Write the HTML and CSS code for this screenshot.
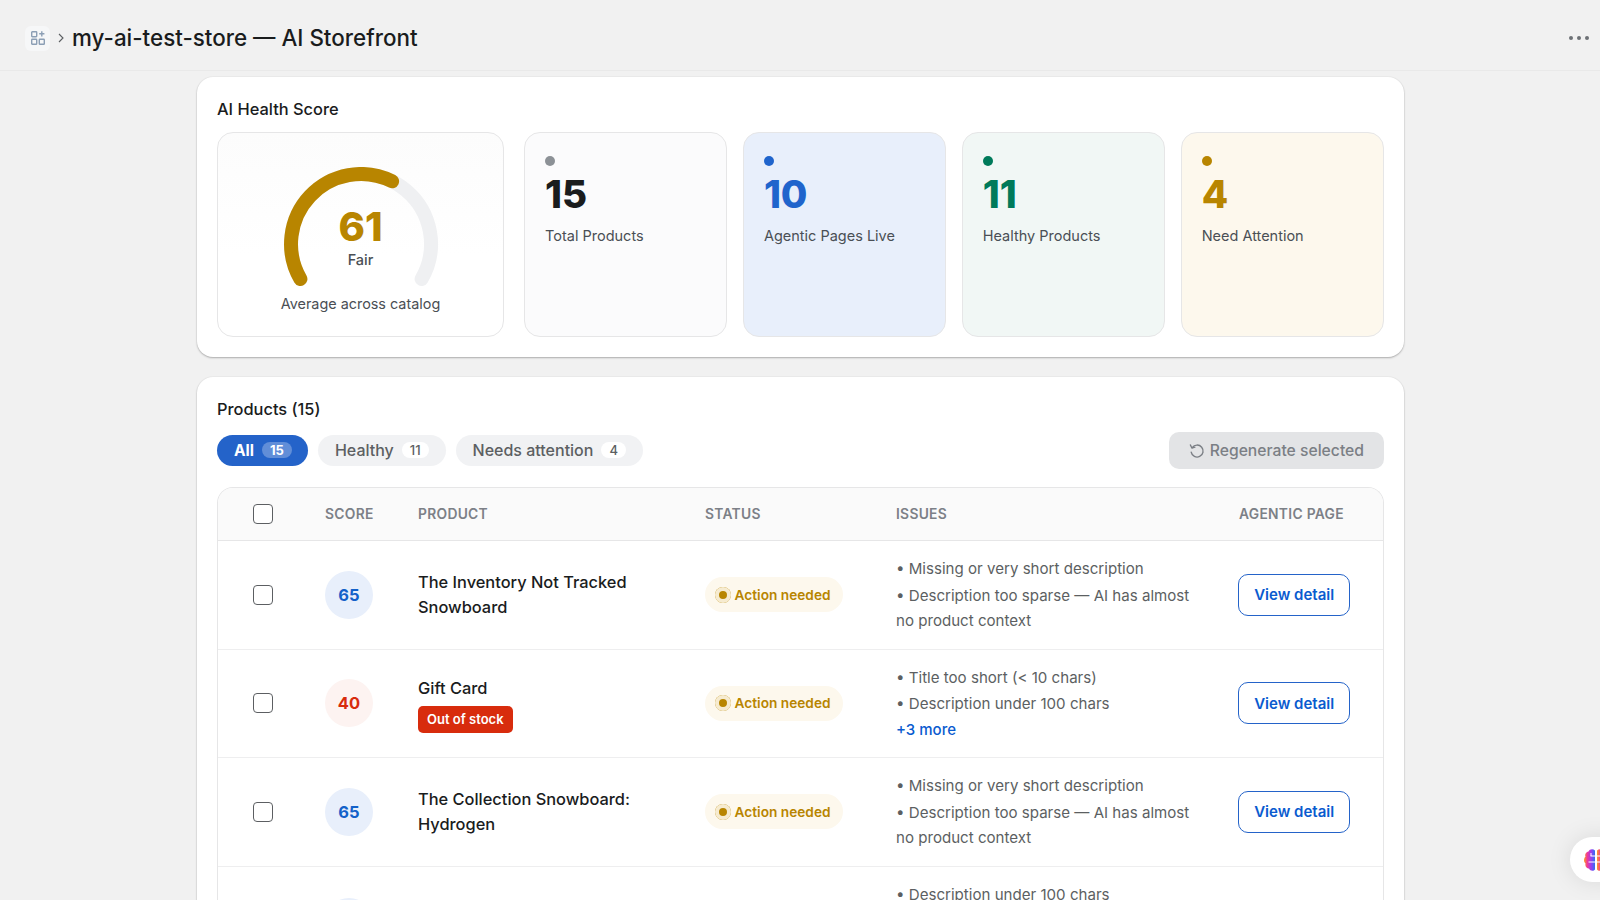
FILE: index.html
```html
<!DOCTYPE html>
<html>
	<head>
		<title>my-ai-test-store — AI Storefront</title>
		<link rel="stylesheet" href="styles.css">
	</head>
	<body>
		<header class="topbar">
			<div class="app-icon">
				<svg width="16" height="16" viewBox="0 0 16 16" fill="none" stroke="#8c9fb5" stroke-width="1.4">
					<rect x="1.7" y="1.7" width="5" height="5" rx=".6"/>
					<rect x="1.7" y="9.3" width="5" height="5" rx=".6"/>
					<rect x="9.3" y="9.3" width="5" height="5" rx=".6"/>
					<path d="M11.8 1.2v5.2M9.2 3.8h5.2"/>
				</svg>
			</div>
			<svg class="crumb" width="8" height="12" viewBox="0 0 8 12" fill="none" stroke="#5c5f62" stroke-width="1.1"><path d="M2 2l4 4-4 4"/></svg>
			<h1 class="page-title">my-ai-test-store — AI Storefront</h1>
			<div class="more"><span></span><span></span><span></span></div>
		</header>

		<main class="content">
			<section class="card">
				<h2 class="card-title">AI Health Score</h2>
				<div class="stats">
					<div class="gauge-card">
						<div class="gauge">
							<svg width="160" height="132" viewBox="0 0 160 132" fill="none" stroke-width="14" stroke-linecap="round">
								<path d="M19.4 112 A70 70 0 1 1 140.6 112" stroke="#eff0f2"/>
								<path d="M19.4 112 A70 70 0 0 1 111.1 14.3" stroke="#b88500"/>
							</svg>
							<div class="gauge-text">
								<div class="gauge-value">61</div>
								<div class="gauge-label">Fair</div>
							</div>
						</div>
						<div class="gauge-note">Average across catalog</div>
					</div>
					<div class="stat-grid">
						<div class="stat stat-gray">
							<span class="stat-dot"></span>
							<div class="stat-value">15</div>
							<div class="stat-label">Total Products</div>
						</div>
						<div class="stat stat-blue">
							<span class="stat-dot"></span>
							<div class="stat-value">10</div>
							<div class="stat-label">Agentic Pages Live</div>
						</div>
						<div class="stat stat-green">
							<span class="stat-dot"></span>
							<div class="stat-value">11</div>
							<div class="stat-label">Healthy Products</div>
						</div>
						<div class="stat stat-amber">
							<span class="stat-dot"></span>
							<div class="stat-value">4</div>
							<div class="stat-label">Need Attention</div>
						</div>
					</div>
				</div>
			</section>

			<section class="card">
				<h2 class="card-title">Products (15)</h2>
				<div class="toolbar">
					<div class="tabs">
						<div class="tab tab-active">All <span class="tab-count">15</span></div>
						<div class="tab">Healthy <span class="tab-count">11</span></div>
						<div class="tab">Needs attention <span class="tab-count">4</span></div>
					</div>
					<button class="regen" type="button">
						<svg width="16" height="16" viewBox="0 0 16 16" fill="none" stroke="#7b7f85" stroke-width="1.4" stroke-linecap="round" stroke-linejoin="round">
							<path d="M3.200 4.600A6 6 0 1 1 2.200 9.200"/>
							<path d="M1.400 2l1.500 3 3-.9"/>
						</svg>
						Regenerate selected
					</button>
				</div>

				<div class="table-wrap">
					<table class="products">
						<colgroup>
							<col class="col-check"><col class="col-score"><col class="col-product"><col class="col-status"><col class="col-issues"><col class="col-page">
						</colgroup>
						<thead>
							<tr>
								<th class="cell-check"><input type="checkbox"></th>
								<th>Score</th>
								<th>Product</th>
								<th>Status</th>
								<th>Issues</th>
								<th class="head-page">Agentic page</th>
							</tr>
						</thead>
						<tbody>
							<tr>
								<td class="cell-check"><input type="checkbox"></td>
								<td><div class="score score-blue">65</div></td>
								<td class="name">The Inventory Not Tracked Snowboard</td>
								<td><span class="status"><i class="status-dot"></i>Action needed</span></td>
								<td>
									<ul class="issues">
										<li>• Missing or very short description</li>
										<li>• Description too sparse — AI has almost no product context</li>
									</ul>
								</td>
								<td><a class="detail" href="#">View detail</a></td>
							</tr>
							<tr class="row-short">
								<td class="cell-check"><input type="checkbox"></td>
								<td><div class="score score-red">40</div></td>
								<td class="name name-stacked">
									Gift Card
									<div><span class="stock">Out of stock</span></div>
								</td>
								<td><span class="status"><i class="status-dot"></i>Action needed</span></td>
								<td>
									<ul class="issues issues-short">
										<li>• Title too short (&lt; 10 chars)</li>
										<li>• Description under 100 chars</li>
									</ul>
									<a class="more-issues" href="#">+3 more</a>
								</td>
								<td><a class="detail" href="#">View detail</a></td>
							</tr>
							<tr>
								<td class="cell-check"><input type="checkbox"></td>
								<td><div class="score score-blue">65</div></td>
								<td class="name">The Collection Snowboard: Hydrogen</td>
								<td><span class="status"><i class="status-dot"></i>Action needed</span></td>
								<td>
									<ul class="issues">
										<li>• Missing or very short description</li>
										<li>• Description too sparse — AI has almost no product context</li>
									</ul>
								</td>
								<td><a class="detail" href="#">View detail</a></td>
							</tr>
							<tr>
								<td class="cell-check"></td>
								<td class="cell-top"><div class="score score-blue"></div></td>
								<td></td>
								<td></td>
								<td class="cell-top">
									<ul class="issues">
										<li>• Description under 100 chars</li>
									</ul>
								</td>
								<td></td>
							</tr>
						</tbody>
					</table>
				</div>
			</section>
		</main>

		<div class="assistant">
			<svg width="26" height="26" viewBox="0 0 26 26" fill="none">
				<defs>
					<linearGradient id="brain" x1="0" y1="0" x2="1" y2="0">
						<stop offset="0" stop-color="#ff9a1f"/>
						<stop offset=".3" stop-color="#f0389a"/>
						<stop offset=".65" stop-color="#9a3df0"/>
						<stop offset="1" stop-color="#2f6df0"/>
					</linearGradient>
				</defs>
				<path d="M12 3.500C10 1.500 6.500 2 5.500 4.500 3 5 1.500 7.500 2.500 9.500 .5 11.500 .5 15 2.500 16.500 1.800 19 3.500 21.500 6 21.500 7 24 10.500 24.500 12 22.500Z" fill="url(#brain)"/>
				<path d="M14 3.500C16 1.500 19.500 2 20.500 4.500 23 5 24.500 7.500 23.500 9.500 25.500 11.500 25.500 15 23.500 16.500 24.200 19 22.500 21.500 20 21.500 19 24 15.500 24.500 14 22.500Z" fill="url(#brain)"/>
				<path d="M12 9H7.500M12 15H5.500M14 9h4.500M14 15h6.500M8 6v3M18 6v3" stroke="#fff" stroke-width="1"/>
			</svg>
		</div>
	</body>
</html>
```

FILE: styles.css
```css
* {
	box-sizing: border-box;
}
html, body {
	margin: 0;
	height: 900px;
	overflow: hidden;
}
body {
	background: #f1f1f1;
	color: #1a1c1d;
	font-family: Inter, "Noto Sans", sans-serif;
}

/* top bar */
.topbar {
	display: flex;
	align-items: center;
	height: 71px;
	padding: 6px 25px 0;
	border-bottom: 1px solid #e9e9e9;
}
.app-icon {
	display: flex;
	align-items: center;
	justify-content: center;
	width: 25px;
	height: 25px;
	background: #f6f7f8;
	border-radius: 6px;
}
.crumb {
	margin: 0 7px 0 7px;
}
.page-title {
	margin: 0;
	font-size: 22.400px;
	font-weight: 500;
	line-height: 32px;
}
.more {
	display: flex;
	gap: 4px;
	margin-left: auto;
	margin-right: -14px;
}
.more span {
	width: 4px;
	height: 4px;
	border-radius: 50%;
	background: #6d7175;
}

/* cards */
.content {
	display: flex;
	flex-direction: column;
	gap: 20px;
	width: 1207px;
	margin: 6px 0 0 197px;
}
.card {
	padding: 20px;
	background: #fff;
	border-radius: 16px;
	box-shadow: 0 1px 2px rgba(0, 0, 0, .28), 0 0 0 1px rgba(0, 0, 0, .02);
}
.card-title {
	margin: 0 0 11px;
	font-size: 16.400px;
	font-weight: 500;
	line-height: 24px;
}

/* health score */
.stats {
	display: flex;
	gap: 20px;
	height: 205px;
}
.stat-grid {
	display: grid;
	flex: 1;
	grid-template-columns: repeat(4, 1fr);
	gap: 15.500px;
}
.gauge-card {
	display: flex;
	flex-direction: column;
	align-items: center;
	flex: 0 0 287px;
	padding-top: 34px;
	background: linear-gradient(#fcfcfc, #fff 60%);
	border: 1px solid #e6e6e7;
	border-radius: 16px;
}
.gauge {
	position: relative;
	height: 132px;
}
.gauge svg {
	display: block;
}
.gauge-text {
	position: absolute;
	top: 37px;
	left: 0;
	right: 0;
	text-align: center;
}
.gauge-value {
	color: #b88500;
	font-size: 40px;
	font-weight: 800;
	line-height: 46px;
}
.gauge-label {
	color: #4a4f55;
	font-size: 14.500px;
	font-weight: 500;
	line-height: 20px;
}
.gauge-note {
	margin-top: -5px;
	color: #4a4f55;
	font-size: 14.400px;
	line-height: 20px;
}
.stat {
	padding: 23px 20px;
	border: 1px solid #e6e6e7;
	border-radius: 16px;
}
.stat-dot {
	display: block;
	width: 10px;
	height: 10px;
	border-radius: 50%;
}
.stat-value {
	margin-top: 5px;
	font-size: 38.500px;
	font-weight: 800;
	line-height: 46px;
}
.stat-label {
	margin-top: 9px;
	color: #4a4f55;
	font-size: 14.500px;
	line-height: 20px;
}
.stat-gray { background: #fbfbfc; }
.stat-gray .stat-dot { background: #8c9196; }
.stat-gray .stat-value { color: #1a1c1d; }
.stat-blue { background: #e8effb; }
.stat-blue .stat-dot { background: #1f64cc; }
.stat-blue .stat-value { color: #1f64cc; }
.stat-green { background: #f1f7f5; }
.stat-green .stat-dot { background: #007a5a; }
.stat-green .stat-value { color: #007a5a; }
.stat-amber { background: #fdf8ed; }
.stat-amber .stat-dot { background: #b88500; }
.stat-amber .stat-value { color: #b88500; }

/* filter row */
.toolbar {
	display: flex;
	align-items: center;
	justify-content: space-between;
	margin-bottom: 18px;
}
.tabs {
	display: flex;
	gap: 10px;
}
.tab {
	display: flex;
	align-items: center;
	gap: 8px;
	height: 31px;
	padding: 0 17px 1px;
	background: #f1f2f4;
	border-radius: 16px;
	color: #5c5f62;
	font-size: 16px;
	font-weight: 500;
}
.tab-count {
	padding: 0 8px;
	background: #fff;
	border-radius: 9px;
	font-size: 13px;
	line-height: 16px;
}
.tab-active {
	padding: 0 16px 1px 17px;
	background: #2463c9;
	color: #fff;
	font-size: 15.500px;
	font-weight: 700;
}
.tab-active .tab-count {
	background: rgba(255, 255, 255, .28);
}
.regen {
	display: flex;
	align-items: center;
	gap: 5px;
	height: 37px;
	padding: 0 20px;
	background: #e3e4e6;
	border: 0;
	border-radius: 10px;
	color: #7b7f85;
	font-family: inherit;
	font-size: 15.700px;
	font-weight: 500;
}

/* table */
.table-wrap {
	border: 1px solid #e6e6e7;
	border-bottom: 0;
	border-radius: 16px 16px 0 0;
	overflow: hidden;
}
.products {
	width: 100%;
	table-layout: fixed;
	border-collapse: collapse;
}
.col-check { width: 91px; }
.col-score { width: 93px; }
.col-product { width: 287px; }
.col-status { width: 191px; }
.col-issues { width: 342px; }
.products th {
	height: 52px;
	padding: 0 16px;
	background: #fafafa;
	border-bottom: 1px solid #e6e6e7;
	color: #7c8087;
	font-size: 13.800px;
	font-weight: 600;
	letter-spacing: .3px;
	text-align: left;
	text-transform: uppercase;
}
.products .head-page {
	padding-left: 17px;
}
.products td {
	padding: 15.500px 16px;
	border-bottom: 1px solid #eeeeef;
	vertical-align: middle;
}
.products .row-short td {
	padding-top: 15px;
	padding-bottom: 15px;
}
.products .cell-check,
.products .row-short .cell-check {
	padding: 0 2px 0 0;
	text-align: center;
}
.products .cell-top {
	vertical-align: top;
	padding-top: 15px;
}
.products .cell-top .score {
	margin-top: 16px;
}
input[type=checkbox] {
	display: block;
	width: 20px;
	height: 20px;
	margin: 0 auto;
	appearance: none;
	background: #fff;
	border: 1px solid #5c5f62;
	border-radius: 4px;
}
.score {
	display: flex;
	align-items: center;
	justify-content: center;
	width: 48px;
	height: 48px;
	border-radius: 50%;
	font-size: 16.500px;
	font-weight: 700;
}
.score-blue {
	background: #e8effb;
	color: #1361c9;
}
.score-red {
	background: #fdf3f1;
	color: #d82c0d;
}
.products .name {
	padding-top: 17px;
	color: #1a1c1d;
	font-size: 16.400px;
	font-weight: 500;
	line-height: 25px;
}
.products .row-short .name-stacked {
	padding-top: 17px;
}
.stock {
	display: inline-block;
	margin-top: 5px;
	padding: 0 9px;
	background: #d82c0d;
	border-radius: 5px;
	color: #fff;
	font-size: 13px;
	font-weight: 600;
	line-height: 27px;
}
.status {
	display: inline-flex;
	align-items: center;
	gap: 3.500px;
	height: 35px;
	padding: 0 12px 0 10px;
	background: #fdf8ed;
	border-radius: 18px;
	color: #b88500;
	font-size: 13.700px;
	font-weight: 600;
}
.status-dot {
	width: 16px;
	height: 16px;
	background: #b88500;
	border-radius: 50%;
	box-shadow: inset 0 0 0 4px #f6ebd0;
}
.issues {
	margin: 0;
	padding: 0;
	list-style: none;
	color: #5c5f62;
	font-size: 15.100px;
	line-height: 25px;
}
.issues li + li {
	margin-top: 2px;
}
.issues-short li + li {
	margin-top: 1px;
}
.more-issues {
	display: block;
	margin-top: 1px;
	color: #0a5bcf;
	font-size: 15px;
	font-weight: 500;
	line-height: 25px;
	text-decoration: none;
}
.detail {
	display: inline-flex;
	align-items: center;
	height: 42px;
	padding: 0 15.200px;
	border: 1px solid #2463c9;
	border-radius: 10px;
	color: #0a5bcf;
	font-size: 15px;
	font-weight: 600;
	text-decoration: none;
}

/* floating assistant button */
.assistant {
	position: fixed;
	top: 837px;
	left: 1570px;
	display: flex;
	align-items: center;
	width: 60px;
	height: 45px;
	padding-left: 13px;
	background: #fff;
	border-radius: 23px;
	box-shadow: 0 0 24px rgba(0, 0, 0, .1);
}
```
